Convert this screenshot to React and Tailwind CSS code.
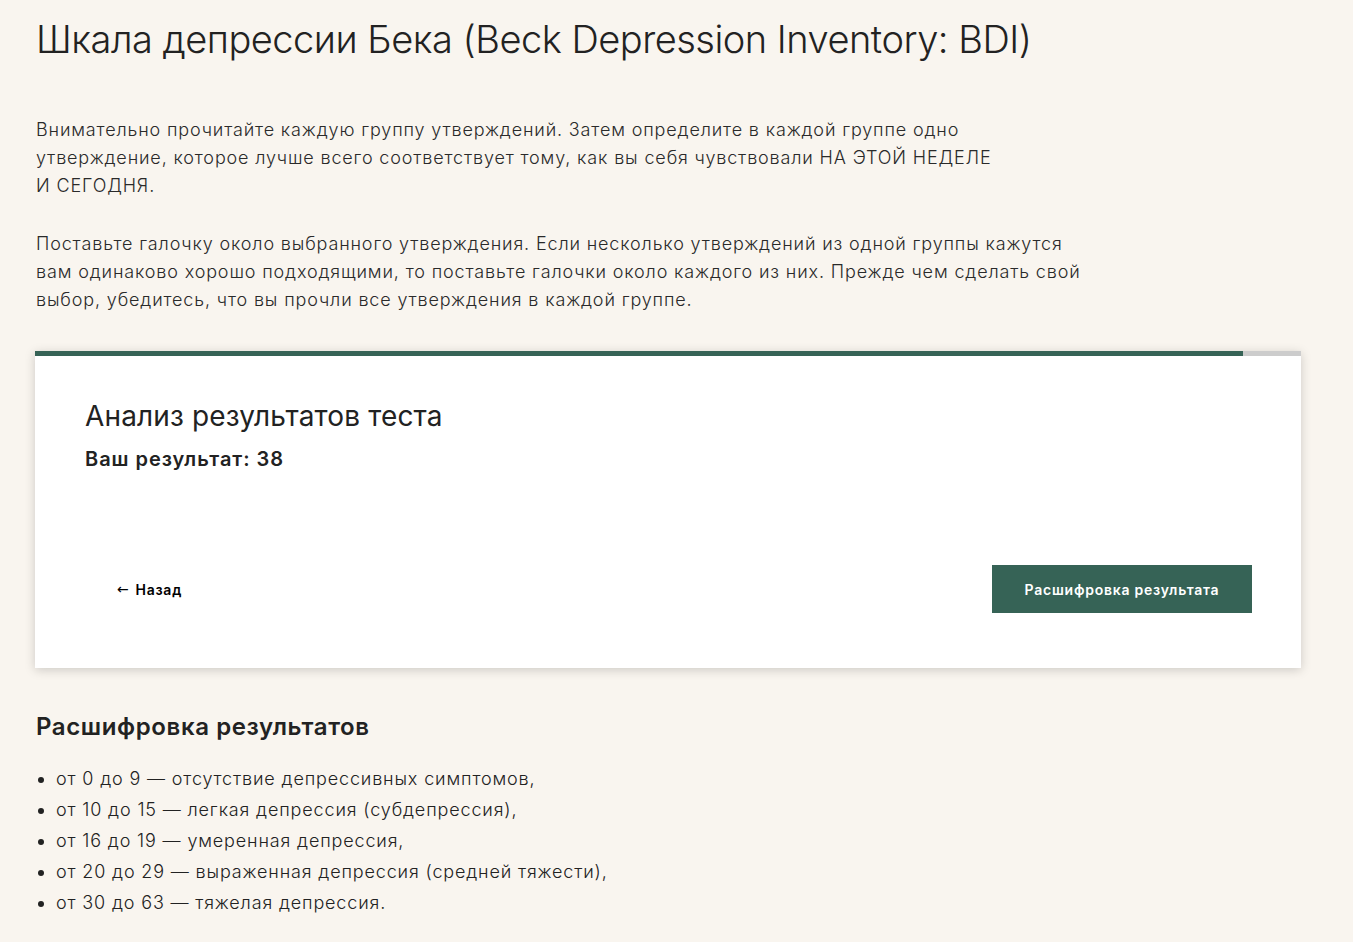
import React from 'react'

const RANGES = [
  'от 0 до 9 — отсутствие депрессивных симптомов,',
  'от 10 до 15 — легкая депрессия (субдепрессия),',
  'от 16 до 19 — умеренная депрессия,',
  'от 20 до 29 — выраженная депрессия (средней тяжести),',
  'от 30 до 63 — тяжелая депрессия.',
]

export default function App() {
  const progress = 95.4

  return (
    <div className="min-h-screen bg-[#f9f5ef] text-[#222222] font-['Inter','Noto_Sans',sans-serif]">
      <div className="px-[35px] pt-[15px] pb-10">
        <h1 className="text-[38px] leading-[48px] font-light tracking-[-0.5px] pl-px">
          Шкала депрессии Бека (Beck Depression Inventory: BDI)
        </h1>

        {/* инструкция */}
        <div className="mt-[53px] pl-px text-[18px] leading-[28px] font-light tracking-[0.85px] text-[#2a2a2a]">
          <p>
            Внимательно прочитайте каждую группу утверждений. Затем определите в каждой группе одно
            <br />
            утверждение, которое лучше всего соответствует тому, как вы себя чувствовали НА ЭТОЙ НЕДЕЛЕ
            <br />
            И СЕГОДНЯ.
          </p>
          <p className="mt-[30px]">
            Поставьте галочку около выбранного утверждения. Если несколько утверждений из одной группы кажутся
            <br />
            вам одинаково хорошо подходящими, то поставьте галочки около каждого из них. Прежде чем сделать свой
            <br />
            выбор, убедитесь, что вы прочли все утверждения в каждой группе.
          </p>
        </div>

        {/* карточка результата */}
        <div className="mt-[37px] w-[1266px] bg-white shadow-[0_2px_10px_rgba(0,0,0,0.18)]">
          <div className="h-[5px] w-full bg-[#cccccc]">
            <div className="h-full bg-[#366356]" style={{ width: `${progress}%` }} />
          </div>
          <div className="pl-[50px] pr-[49px] pt-[42px] pb-[55px]">
            <h2 className="text-[28px] leading-[36px] font-normal tracking-[0.15px]">Анализ результатов теста</h2>
            <p className="mt-[11px] text-[20px] leading-[28px] font-semibold tracking-[0.95px]">Ваш результат: 38</p>
            <div className="mt-[92px] flex items-center justify-between">
              <button className="h-12 px-8 flex items-center text-[14px] font-semibold tracking-[0.75px] text-black">
                <span className="font-['DejaVu_Sans',sans-serif] font-normal text-[14px] mr-[6px]">←</span>
                Назад
              </button>
              <button className="h-12 w-[260px] bg-[#366356] text-[14px] font-semibold tracking-[0.75px] text-white">
                Расшифровка результата
              </button>
            </div>
          </div>
        </div>

        {/* расшифровка */}
        <h2 className="mt-[43px] pl-px text-[24px] leading-[32px] font-semibold tracking-[0.6px]">Расшифровка результатов</h2>
        <ul className="mt-[20px] pl-[21px] list-disc text-[18px] leading-[31px] font-light tracking-[0.85px]">
          {RANGES.map(r => (
            <li key={r}>{r}</li>
          ))}
        </ul>
      </div>
    </div>
  )
}
